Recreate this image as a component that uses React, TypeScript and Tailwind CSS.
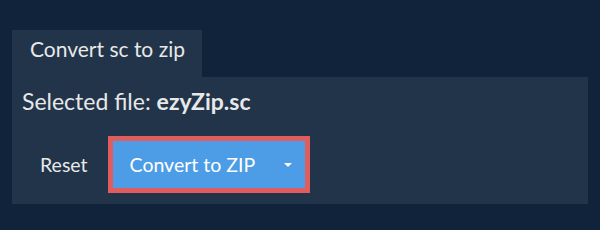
import React from "react";

export default function App() {
  return (
    <div className="w-[600px] h-[230px] bg-[#11233a] pt-[30px] px-[12px] font-['Lato',sans-serif] text-[#e8e8e8]">
      <div className="flex">
        <div className="h-[47px] w-[190px] bg-[#213449] pl-[18px] pt-[8px] text-[21px] leading-none">
          Convert sc to zip
        </div>
      </div>
      <div className="h-[127px] bg-[#213449] pl-[10px] pt-[10px]">
        <div className="text-[23px] leading-[28px]">
          Selected file: <span className="font-bold">ezyZip.sc</span>
        </div>
        <div className="flex items-center mt-[21px]">
          <button className="h-[48px] pl-[18px] pr-[20px] text-[19.5px] text-[#e8e8e8]">Reset</button>
          <div className="border-[5px] border-[#e05d5d] flex">
            <button className="h-[47px] bg-[#4d9de6] flex items-center pl-[17px] pr-[13px] text-[19.5px] text-white">
              <span>Convert to ZIP</span>
              <svg className="ml-[29px]" width="8" height="4" viewBox="0 0 8 4">
                <path d="M0 0 L8 0 L4 4 Z" fill="#ffffff" />
              </svg>
            </button>
          </div>
        </div>
      </div>
    </div>
  );
}
